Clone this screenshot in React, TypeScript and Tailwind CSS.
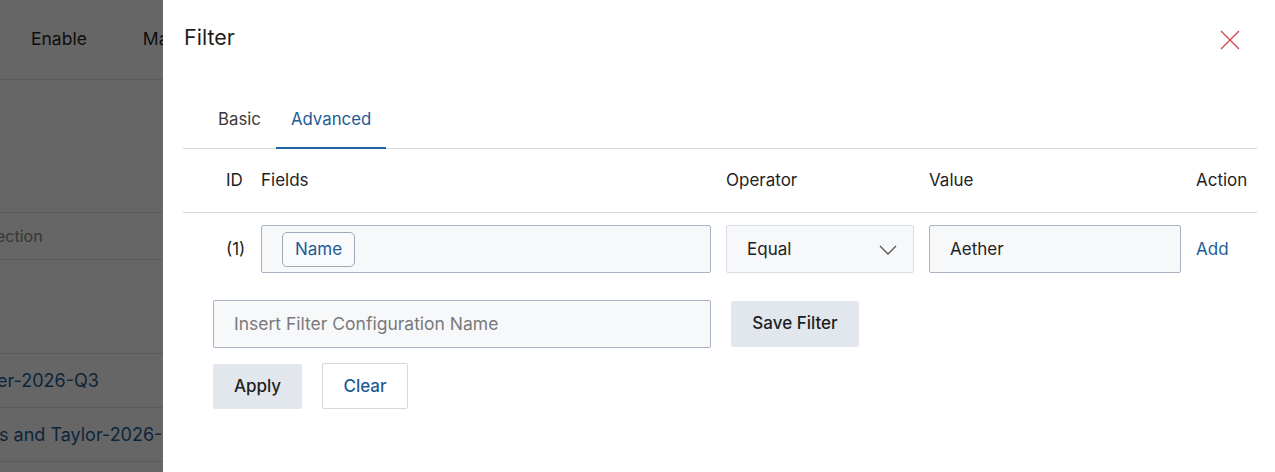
// Dimmed page behind the drawer, only its left edge shows.
function BackgroundPage() {
  return (
    <div className="w-[163px] overflow-hidden text-[17.5px] text-[#262626]">
      <div className="flex h-[80px] items-center border-b border-[#e2e2e2]">
        <span className="ml-[31px]">Enable</span>
        <span className="ml-[56px] whitespace-nowrap">Match</span>
      </div>
      <div className="h-[133px] border-b border-[#e2e2e2]" />
      <div className="flex h-[47px] items-center border-b border-[#e2e2e2] text-[16px] text-[#8a8a8a]">
        <span className="-ml-[4px]">ection</span>
      </div>
      <div className="h-[94px] border-b border-[#e2e2e2]" />
      <div className="flex h-[54px] items-center border-b border-[#e2e2e2] text-[18px] text-[#1e5c96]">
        <span className="-ml-[3px] whitespace-nowrap">er-2026-Q3</span>
      </div>
      <div className="flex h-[54px] items-center border-b border-[#e2e2e2] text-[18px] text-[#1e5c96]">
        <span className="-ml-[1px] whitespace-nowrap">s and Taylor-2026-Q4</span>
      </div>
    </div>
  );
}

export default function App() {
  return (
    <div
      className="relative h-[472px] w-full overflow-hidden bg-white"
      style={{ fontFamily: 'Inter, "Noto Sans", sans-serif' }}
    >
      <BackgroundPage />
      <div className="absolute inset-0 bg-black/60" />

      <div className="absolute right-0 top-0 flex h-full w-[1112px] flex-col bg-white pl-[20px] pr-[18px]">
        <div className="flex h-[76px] items-start justify-between">
          <h2 className="mt-[21px] pl-[1px] text-[21.5px] text-[#1f1f1f]">Filter</h2>
          <button className="mr-[15px] mt-[28px] text-[#d64545]" aria-label="Close">
            <svg width="24" height="24" viewBox="0 0 24 24" fill="none" stroke="currentColor" strokeWidth="1.3">
              <path d="M3 3 L21 21 M21 3 L3 21" />
            </svg>
          </button>
        </div>

        {/* tabs */}
        <div className="flex h-[73px] items-end border-b border-[#d4d9df] pl-[20px] text-[16.8px]">
          <div className="flex h-[41px] items-start px-[15px] text-[#3a3a3a]">Basic</div>
          <div className="-mb-px flex h-[42px] items-start border-b-2 border-[#2162a0] px-[15px] text-[#1e5c96]">
            Advanced
          </div>
        </div>

        {/* table header */}
        <div className="grid h-[64px] grid-cols-[20px_450px_188px_252px_1fr] items-center gap-x-[15px] border-b border-[#d4d9df] pl-[43px] pt-[1px] text-[17px] text-[#1f1f1f]">
          <span>ID</span>
          <span>Fields</span>
          <span>Operator</span>
          <span>Value</span>
          <span>Action</span>
        </div>

        {/* condition row */}
        <div className="grid grid-cols-[20px_450px_188px_252px_1fr] items-center gap-x-[15px] pl-[43px] pt-[12px] text-[17px]">
          <span className="pt-[1px] text-[#222]">(1)</span>
          <div className="flex h-[48px] items-center rounded-[2px] border border-[#a9b3c1] bg-[#f7f8fa] pl-[20px] pt-[1px]">
            <span className="flex h-[35px] items-center rounded-[5px] border border-[#9eaab8] bg-[#f9fafb] px-[12px] text-[#1e5c96]">
              Name
            </span>
          </div>
          <div className="flex h-[48px] items-center justify-between rounded-[2px] border border-[#d8dde3] bg-[#f7f8fa] pl-[20px] pr-[16px] pt-[1px] text-[#222]">
            <span>Equal</span>
            <svg width="18" height="10" viewBox="0 0 18 10" fill="none" stroke="#555" strokeWidth="1.3">
              <path d="M1 1 L9 9 L17 1" />
            </svg>
          </div>
          <div className="flex h-[48px] items-center rounded-[2px] border border-[#a9b3c1] bg-[#f7f8fa] pl-[20px] pt-[1px] text-[#222]">
            Aether
          </div>
          <span className="pt-[1px] text-[#1e5c96]">Add</span>
        </div>

        {/* save config */}
        <div className="mt-[27px] flex items-center gap-[20px] pl-[30px] text-[17px]">
          <div className="flex h-[48px] w-[498px] items-center rounded-[2px] border border-[#a9b3c1] bg-[#f7f8fa] pl-[20px] text-[17.5px] text-[#7a7a7a]">
            Insert Filter Configuration Name
          </div>
          <button className="h-[46px] w-[128px] rounded-[2px] bg-[#e2e7ee] font-medium text-[#1f1f1f]">Save Filter</button>
        </div>

        <div className="mt-[15px] flex items-center gap-[20px] pl-[30px] text-[17px]">
          <button className="h-[45px] w-[89px] rounded-[2px] bg-[#e2e7ee] pt-[1px] font-medium text-[#1f1f1f]">Apply</button>
          <button className="h-[46px] w-[86px] rounded-[2px] border border-[#d4d9df] bg-white pt-[1px] font-medium text-[#1e5c96]">
            Clear
          </button>
        </div>
      </div>
    </div>
  );
}
